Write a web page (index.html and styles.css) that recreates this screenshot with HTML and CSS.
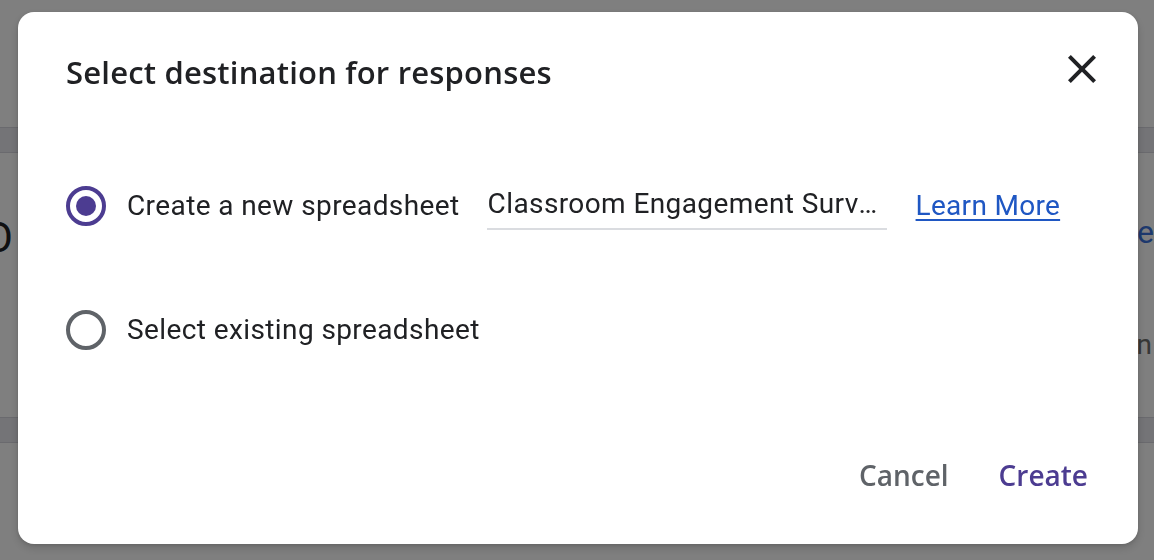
FILE: index.html
```html
<!DOCTYPE html>
<html lang="en">
<head>
<meta charset="utf-8">
<title>Select destination for responses</title>
<link rel="stylesheet" href="styles.css">
</head>
<body>
<div class="page">
  <div class="page-top"></div>
  <div class="band"></div>
  <div class="content">
    <div class="line line-one">
      <span class="big-o">O</span>
      <span class="blue-text">Done</span>
    </div>
    <div class="line line-two">
      <span class="gray-text">on</span>
    </div>
  </div>
  <div class="band"></div>
  <div class="page-bottom"></div>
</div>

<div class="scrim">
  <div class="dialog" role="dialog" aria-labelledby="dlg-title">
    <div class="header">
      <h1 id="dlg-title" class="title">Select destination for responses</h1>
      <button class="close" aria-label="Close">
        <svg viewBox="0 0 24 24" width="48" height="48"><path d="M19 6.41 17.59 5 12 10.59 6.41 5 5 6.41 10.59 12 5 17.59 6.41 19 12 13.41 17.59 19 19 17.59 13.41 12z" fill="#202124"/></svg>
      </button>
    </div>
    <div class="options">
      <div class="row">
        <span class="radio radio-on"><span class="dot"></span></span>
        <span class="label">Create a new spreadsheet</span>
        <div class="field"><span class="field-text">Classroom Engagement Survey (Responses)</span></div>
        <a class="link" href="#">Learn More</a>
      </div>
      <div class="row">
        <span class="radio radio-off"></span>
        <span class="label">Select existing spreadsheet</span>
      </div>
    </div>
    <div class="footer">
      <button class="btn btn-cancel">Cancel</button>
      <button class="btn btn-create">Create</button>
    </div>
  </div>
</div>
</body>
</html>
```

FILE: styles.css
```css
html, body {
  margin: 0;
  padding: 0;
}
body {
  width: 1154px;
  height: 560px;
  overflow: hidden;
  background: #ffffff;
  font-family: Roboto, "Liberation Sans", Arial, sans-serif;
}

/* underlying page */
.page {
  display: flex;
  flex-direction: column;
  height: 560px;
}
.page-top {
  height: 127px;
  background: #ffffff;
}
.band {
  height: 24px;
  background: #e8e8ee;
  border-top: 1px solid #d4d4dc;
  border-bottom: 1px solid #d4d4dc;
}
.content {
  height: 264px;
  background: #ffffff;
  display: flex;
  flex-direction: column;
}
.line {
  display: flex;
  justify-content: space-between;
  align-items: baseline;
}
.line-one {
  margin-top: 60px;
  height: 50px;
}
.big-o {
  font-size: 42px;
  line-height: 50px;
  color: #202124;
  margin-left: -16px;
}
.blue-text {
  align-self: flex-start;
  font-size: 32px;
  line-height: 38px;
  color: #3b72dc;
  margin-right: 0;
}
.line-two {
  margin-top: 62px;
  justify-content: flex-end;
}
.gray-text {
  font-size: 28px;
  line-height: 40px;
  color: #6f6f6f;
  margin-right: 2px;
}
.page-bottom {
  flex: 1;
  background: #ffffff;
}

/* scrim + dialog */
.scrim {
  position: fixed;
  inset: 0;
  background: rgba(0, 0, 0, 0.5);
  display: flex;
  align-items: flex-start;
  padding: 12px 0 0 18px;
}
.dialog {
  width: 1120px;
  height: 532px;
  box-sizing: border-box;
  background: #ffffff;
  border-radius: 16px;
  box-shadow: 0 4px 10px rgba(0, 0, 0, 0.15), 0 1px 4px rgba(0, 0, 0, 0.12);
  padding: 36px 42px 0 48px;
  display: flex;
  flex-direction: column;
}
.header {
  display: flex;
  justify-content: space-between;
  align-items: center;
  height: 48px;
}
.title {
  margin: 0;
  font-family: "Open Sans", Roboto, sans-serif;
  font-weight: 600;
  font-size: 31px;
  line-height: 40px;
  color: #202124;
  letter-spacing: 0.2px;
}
.close {
  width: 48px;
  height: 48px;
  padding: 0;
  margin: -6px -10px 0 0;
  border: none;
  background: none;
  display: flex;
  align-items: center;
  justify-content: center;
}

.options {
  margin-top: 90px;
  display: flex;
  flex-direction: column;
  gap: 84px;
}
.row {
  display: flex;
  align-items: center;
  height: 40px;
}
.radio {
  width: 40px;
  height: 40px;
  box-sizing: border-box;
  border-radius: 50%;
  display: flex;
  align-items: center;
  justify-content: center;
  flex: none;
}
.radio-on {
  border: 4px solid #4c3c91;
}
.radio-on .dot {
  width: 20px;
  height: 20px;
  border-radius: 50%;
  background: #4c3c91;
}
.radio-off {
  border: 4px solid #5f6368;
}
.label {
  margin-left: 21px;
  font-size: 28px;
  line-height: 36px;
  letter-spacing: 0.4px;
  color: #202124;
  white-space: nowrap;
}
.field {
  margin-left: 27px;
  width: 400px;
  box-sizing: border-box;
  padding: 4px 0 6px 1px;
  border-bottom: 2px solid #dadce0;
  font-size: 28px;
  line-height: 36px;
  letter-spacing: 0.4px;
  color: #202124;
}
.field-text {
  display: block;
  overflow: hidden;
  white-space: nowrap;
  text-overflow: ellipsis;
}
.link {
  margin-left: 29px;
  font-size: 28px;
  line-height: 36px;
  letter-spacing: 0.3px;
  color: #1f57c3;
  text-decoration: underline;
  text-underline-offset: 4px;
  white-space: nowrap;
}

.footer {
  margin-top: 101px;
  display: flex;
  justify-content: flex-end;
  gap: 34px;
}
.btn {
  height: 48px;
  padding: 0 8px;
  border: none;
  background: none;
  font-family: "Open Sans", Roboto, sans-serif;
  font-weight: 600;
  font-size: 28px;
  line-height: 48px;
}
.btn-cancel {
  color: #5f6368;
}
.btn-create {
  color: #4c3c91;
}
```
